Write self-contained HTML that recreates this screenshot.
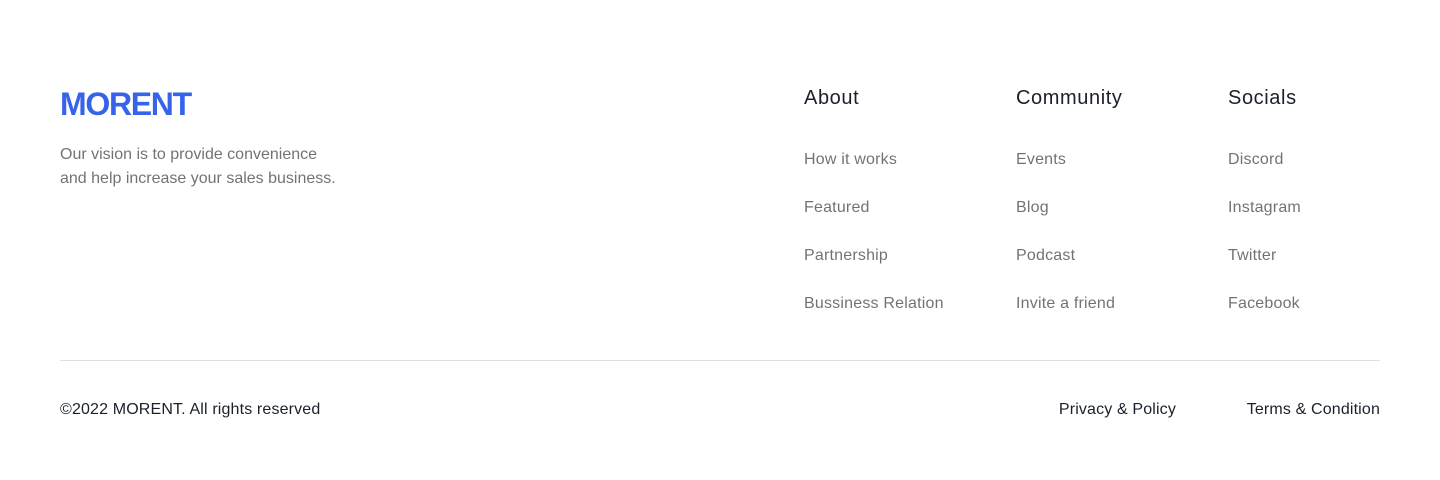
<!DOCTYPE html>
<html><head><meta charset="utf-8"><style>
*{margin:0;padding:0;box-sizing:border-box}
body{width:1440px;height:480px;background:#fff;font-family:"Liberation Sans",sans-serif;position:relative;overflow:hidden}
.a{position:absolute;white-space:nowrap}
.logo{left:60px;top:85px;font-size:32px;font-weight:bold;color:#3563E9;letter-spacing:-1.3px;line-height:38px}
.desc{left:60px;top:143px;font-size:16px;line-height:24px;color:rgba(19,19,19,0.6);letter-spacing:0}
.h{font-size:20px;color:#1A202C;letter-spacing:0.6px;line-height:24px;top:86px}
.l{font-size:16px;color:rgba(19,19,19,0.6);letter-spacing:0.2px;line-height:20px}
.hr{left:60px;top:360px;width:1320px;height:1px;background:#E0E0E0}
.b{top:400px;font-size:16px;color:#1A202C;letter-spacing:0.15px;line-height:20px}
</style></head><body>
<div class="a logo">MORENT</div>
<div class="a desc">Our vision is to provide convenience<br>and help increase your sales business.</div>

<div class="a h" style="left:804px">About</div>
<div class="a l" style="left:804px;top:150px">How it works</div>
<div class="a l" style="left:804px;top:198px">Featured</div>
<div class="a l" style="left:804px;top:246px">Partnership</div>
<div class="a l" style="left:804px;top:294px">Bussiness Relation</div>

<div class="a h" style="left:1016px">Community</div>
<div class="a l" style="left:1016px;top:150px">Events</div>
<div class="a l" style="left:1016px;top:198px">Blog</div>
<div class="a l" style="left:1016px;top:246px">Podcast</div>
<div class="a l" style="left:1016px;top:294px">Invite a friend</div>

<div class="a h" style="left:1228px">Socials</div>
<div class="a l" style="left:1228px;top:150px">Discord</div>
<div class="a l" style="left:1228px;top:198px">Instagram</div>
<div class="a l" style="left:1228px;top:246px">Twitter</div>
<div class="a l" style="left:1228px;top:294px">Facebook</div>

<div class="a hr"></div>
<div class="a b" style="left:60px">©2022 MORENT. All rights reserved</div>
<div class="a b" style="right:264px">Privacy &amp; Policy</div>
<div class="a b" style="right:60px">Terms &amp; Condition</div>
</body></html>
